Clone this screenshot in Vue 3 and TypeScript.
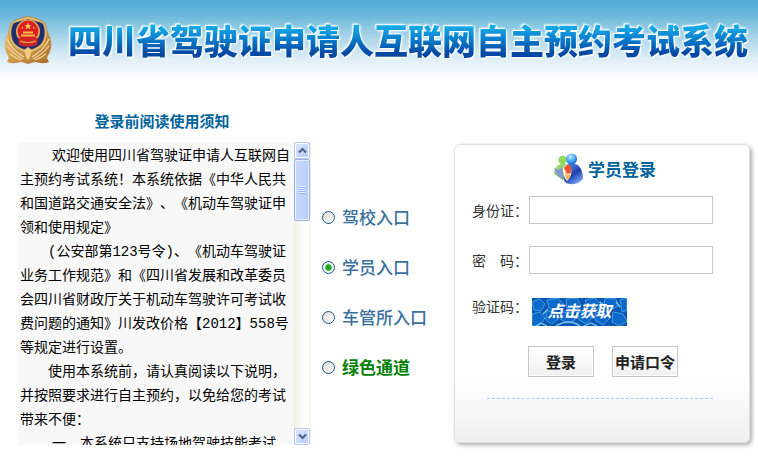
<script setup lang="ts">
import { onMounted, ref } from 'vue'

interface Entry {
  value: string
  label: string
  highlight?: boolean
}

interface Paragraph {
  text: string
  wide?: boolean
}

const entries: Entry[] = [
  { value: 'school', label: '驾校入口' },
  { value: 'student', label: '学员入口' },
  { value: 'office', label: '车管所入口' },
  { value: 'green', label: '绿色通道', highlight: true },
]

const paragraphs: Paragraph[] = [
  {
    text: '欢迎使用四川省驾驶证申请人互联网自主预约考试系统！本系统依据《中华人民共和国道路交通安全法》、《机动车驾驶证申领和使用规定》',
    wide: true,
  },
  {
    text: '(公安部第123号令)、《机动车驾驶证业务工作规范》和《四川省发展和改革委员会四川省财政厅关于机动车驾驶许可考试收费问题的通知》川发改价格【2012】558号等规定进行设置。',
  },
  { text: '使用本系统前，请认真阅读以下说明，并按照要求进行自主预约，以免给您的考试带来不便：' },
  { text: '一、本系统只支持场地驾驶技能考试', wide: true },
]

const selected = ref('student')
const idNumber = ref('')
const password = ref('')
const notice = ref<HTMLElement | null>(null)
const thumbTop = ref(0)

function syncThumb() {
  const el = notice.value
  if (!el) return
  const range = el.scrollHeight - el.clientHeight
  thumbTop.value = range > 0 ? (el.scrollTop / range) * 77 : 0
}

function scrollNotice(step: number) {
  if (notice.value) notice.value.scrollTop += step
  syncThumb()
}

onMounted(syncThumb)
</script>

<template>
  <div class="page">
    <header class="banner">
      <svg class="emblem" viewBox="0 0 48 48" aria-hidden="true">
        <defs>
          <linearGradient id="gold" x1="0" y1="0" x2="1" y2="1">
            <stop offset="0" stop-color="#e9c877" />
            <stop offset="0.5" stop-color="#d09a4c" />
            <stop offset="1" stop-color="#a8682a" />
          </linearGradient>
        </defs>
        <path
          d="M7 12 C2 18 0 25 1 32 C2 37 4 39 5 42 L3 46 C8 48 13 47 17 46 L24 48 L31 46 C35 47 40 48 45 46 L43 42 C44 39 46 37 47 32 C48 25 46 18 41 12 Z"
          fill="url(#gold)"
        />
        <path
          d="M3 23 Q8 34 20 41 M3 30 Q9 38 19 43 M6 38 Q11 42 17 44 M45 23 Q40 34 28 41 M45 30 Q39 38 29 43 M42 38 Q37 42 31 44"
          fill="none"
          stroke="#f3dca0"
          stroke-width="1.2"
        />
        <path
          d="M24 0 C19 2 11 3 7 7 C4 14 4 23 9 30 C14 35 20 36 24 39 C28 36 34 35 39 30 C44 23 44 14 41 7 C37 3 29 2 24 0 Z"
          fill="#dfb66a"
          stroke="#a87634"
          stroke-width="0.6"
        />
        <path
          d="M24 3 C19 5 13 5 9 8 C6 15 7 23 11 28 C15 32 20 33 24 35 C28 33 33 32 37 28 C41 23 42 15 39 8 C35 5 29 5 24 3 Z"
          fill="#20306f"
        />
        <circle cx="24" cy="15.5" r="12" fill="#e0ac53" />
        <circle cx="24" cy="15" r="10.4" fill="#dd1f22" />
        <path
          d="M24 6.5 L24.9 9.2 L27.6 9.2 L25.4 10.8 L26.3 13.4 L24 11.8 L21.7 13.4 L22.6 10.8 L20.4 9.2 L23.1 9.2 Z"
          fill="#ffd85a"
        />
        <path d="M17.5 11h1.6v1.6h-1.6zM29 11h1.6v1.6h-1.6zM19 15.5h10v2H19zM17 18.5h14v2H17z" fill="#f6bd46" />
        <path d="M14 22 L34 22 L33 29 Q24 32 15 29 Z" fill="#cf2427" />
        <path d="M16 25 Q24 28 32 25" fill="none" stroke="#e8ae4c" stroke-width="1.2" />
        <path d="M20 34 L24 31 L28 34 L26 41 L24 44 L22 41 Z" fill="#edcc82" />
      </svg>
      <h1 class="title"><span class="title-text">四川省驾驶证申请人互联网自主预约考试系统</span></h1>
    </header>

    <main class="content">
      <section class="notice">
        <h2 class="notice-title">登录前阅读使用须知</h2>
        <div class="notice-frame">
          <div ref="notice" class="notice-body" tabindex="0" @scroll="syncThumb">
            <p v-for="(item, i) in paragraphs" :key="i" :class="{ wide: item.wide }">{{ item.text }}</p>
          </div>
          <div class="scrollbar">
            <button type="button" class="arrow" aria-label="向上滚动" @click="scrollNotice(-24)">
              <svg viewBox="0 0 9 7"><path d="M1 5.5 L4.5 2 L8 5.5" /></svg>
            </button>
            <div class="track">
              <div class="thumb" :style="{ top: thumbTop + '%' }">
                <span class="grip"></span>
              </div>
            </div>
            <button type="button" class="arrow" aria-label="向下滚动" @click="scrollNotice(24)">
              <svg viewBox="0 0 9 7"><path d="M1 1.5 L4.5 5 L8 1.5" /></svg>
            </button>
          </div>
        </div>
      </section>

      <div class="entries" role="radiogroup" aria-label="入口">
        <label v-for="entry in entries" :key="entry.value" class="entry" :class="{ green: entry.highlight }">
          <input v-model="selected" type="radio" name="entry" :value="entry.value" />
          <span>{{ entry.label }}</span>
        </label>
      </div>

      <form class="login" @submit.prevent>
        <h2 class="login-title">
          <svg class="people" viewBox="0 0 30 32" aria-hidden="true">
            <defs>
              <radialGradient id="blueHead" cx="0.4" cy="0.3" r="0.7">
                <stop offset="0" stop-color="#c5ecff" />
                <stop offset="0.5" stop-color="#55b2f4" />
                <stop offset="1" stop-color="#1769cc" />
              </radialGradient>
              <linearGradient id="blueBody" x1="0" y1="0" x2="0.6" y2="1">
                <stop offset="0" stop-color="#5a9af0" />
                <stop offset="0.6" stop-color="#203fae" />
                <stop offset="1" stop-color="#6d9ff0" />
              </linearGradient>
              <linearGradient id="greenBody" x1="0" y1="0" x2="1" y2="1">
                <stop offset="0" stop-color="#b8ea88" />
                <stop offset="1" stop-color="#3fa63a" />
              </linearGradient>
            </defs>
            <circle cx="9.5" cy="7" r="4.2" fill="#93d85c" />
            <path d="M5 12 Q10 9 15 12 L17 20 L10 27 L1 21 Q1 15 5 12 Z" fill="url(#greenBody)" />
            <path d="M13 12 Q19 9 25 12 Q30 17 30 26 Q25 32 18 31 Q12 31 11 27 Z" fill="url(#blueBody)" />
            <circle cx="18.5" cy="6" r="5.6" fill="url(#blueHead)" />
            <path d="M1 15 Q5 18 9 15 L11 26 Q4 24 1 15 Z" fill="#8394db" />
            <path d="M10 15 Q14 8 18 15 Q20 22 14 28 Q10 24 10 15 Z" fill="#fff4e6" />
            <path d="M11 15 Q15 9 18 14 L18 20 L14 21 Z" fill="#f0512e" />
            <path d="M12 19 L14 22 L18 21 Q17 25 14 27 Q12 24 12 19 Z" fill="#ffb449" />
          </svg>
          <span>学员登录</span>
        </h2>

        <div class="field">
          <label for="id-number">身份证：</label>
          <input id="id-number" v-model="idNumber" type="text" />
        </div>
        <div class="field">
          <label for="password">密　码：</label>
          <input id="password" v-model="password" type="password" />
        </div>
        <div class="field code">
          <span class="caption">验证码：</span>
          <button type="button" class="captcha">
            <svg viewBox="0 0 95 28" preserveAspectRatio="none" aria-hidden="true">
              <rect width="95" height="28" fill="#0a55b5" />
              <g fill="#0d68cb" stroke="#3f9edb" stroke-width="1">
                <path d="M0 4 L8 1 L13 6 L9 13 L2 12 Z M15 2 L26 0 L31 6 L25 12 L17 10 Z M34 1 L45 0 L49 8 L42 13 L35 10 Z M53 2 L63 0 L69 6 L65 13 L56 12 Z M73 0 L84 1 L86 8 L79 12 L72 8 Z M88 2 L95 0 V12 L90 14 Z" />
                <path d="M0 16 L8 14 L13 20 L8 27 L0 28 Z M14 13 L23 13 L27 20 L20 26 L14 22 Z M29 14 L41 15 L43 22 L36 25 L28 21 Z M46 14 L57 14 L60 20 L54 26 L47 22 Z M63 15 L74 13 L78 20 L71 27 L63 22 Z M81 14 L91 16 L95 23 L88 28 L80 24 Z" />
              </g>
              <path
                d="M24 28 Q37 20 48 28 M4 28 L9 25 L15 28 M52 28 L59 25 L65 28 M68 4 L73 8 M11 16 L16 11 M84 4 L88 9"
                fill="none"
                stroke="#72c9e9"
                stroke-width="1.3"
              />
            </svg>
            <span>点击获取</span>
          </button>
        </div>
        <div class="actions">
          <button type="submit">登录</button>
          <button type="button">申请口令</button>
        </div>
        <div class="divider"></div>
      </form>
    </main>
  </div>
</template>

<style>
body {
  margin: 0;
  background: #fff;
}
</style>

<style scoped>
.page {
  font-family: "Noto Sans CJK SC", sans-serif;
  font-size: 14px;
  color: #000;
  text-spacing-trim: space-all;
}
h1,
h2,
p {
  margin: 0;
}
button,
input {
  box-sizing: border-box;
  margin: 0;
  font-family: inherit;
}
button {
  padding: 0;
  cursor: pointer;
}
.banner {
  display: flex;
  align-items: center;
  gap: 16px;
  height: 80px;
  padding: 0 0 0 4px;
  box-sizing: border-box;
  background: linear-gradient(#52aed6 0, #67b7da 14px, #acd6ea 38px, #e1eff7 60px, #fff 80px);
}
.emblem {
  flex: none;
  width: 48px;
  height: 48px;
}
.title {
  font-size: 34px;
  line-height: 48px;
  font-weight: 900;
  white-space: nowrap;
  filter: drop-shadow(1px 1px 0 #fff) drop-shadow(-1px -1px 0 #fff) drop-shadow(0 0 1px #fff);
}
.title-text {
  color: transparent;
  background: linear-gradient(#16a9e6 25%, #0a7ccc 50%, #0548a4 78%);
  background-clip: text;
  -webkit-background-clip: text;
}
.content {
  display: grid;
  grid-template-columns: 293px minmax(110px, 1fr) 296px;
  column-gap: 11px;
  align-items: start;
  padding: 28px 8px 24px 18px;
}
.notice-title {
  padding-right: 5px;
  font-size: 15px;
  line-height: 26px;
  text-align: center;
  color: #00639c;
}
.notice-frame {
  display: flex;
  height: 303px;
  margin-top: 8px;
}
.notice-body {
  flex: 1;
  box-sizing: border-box;
  padding: 2px 0 0 2px;
  overflow-y: auto;
  scrollbar-width: none;
  background: #f8f8f8;
  font-family: "Liberation Mono", "Noto Sans CJK SC", monospace;
  line-height: 24px;
  outline: none;
}
.notice-body p {
  text-indent: 28px;
}
.notice-body p.wide {
  text-indent: 32px;
}
.scrollbar {
  display: flex;
  flex-direction: column;
  width: 17px;
  background: linear-gradient(90deg, #eeede5, #f8f8f3 30%, #fefefb 85%, #eeede5);
}
.arrow {
  display: flex;
  align-items: center;
  justify-content: center;
  width: 16px;
  height: 17px;
  border: 1px solid #b4c8f6;
  border-radius: 2px;
  background: linear-gradient(135deg, #dce7ff, #b6cafa);
  box-shadow: inset 0 0 0 1px #fff;
}
.arrow svg {
  width: 9px;
  height: 7px;
  fill: none;
  stroke: #4d6185;
  stroke-width: 2;
}
.track {
  position: relative;
  flex: 1;
}
.thumb {
  position: absolute;
  left: 0;
  display: flex;
  align-items: center;
  justify-content: center;
  box-sizing: border-box;
  width: 16px;
  height: 23%;
  border: 1px solid #98b1e4;
  border-radius: 2px;
  background: linear-gradient(90deg, #c9d8fc, #b9cbf9);
  box-shadow: inset 0 0 0 1px #e9f0ff;
}
.grip {
  width: 6px;
  height: 8px;
  background: repeating-linear-gradient(#eef4ff 0 1px, #8cb0f8 1px 2px);
}
.entries {
  display: flex;
  flex-direction: column;
  gap: 26px;
  padding-top: 97px;
}
.entry {
  display: flex;
  align-items: center;
  gap: 7px;
  font-size: 17px;
  line-height: 24px;
  font-weight: 500;
  color: #39709e;
  white-space: nowrap;
}
.entry.green {
  font-weight: 700;
  color: #008000;
}
.entry input {
  appearance: none;
  width: 13px;
  height: 13px;
  border: 1px solid #1f5280;
  border-radius: 50%;
  background: linear-gradient(135deg, #dcdcd7, #fff);
}
.entry input:checked {
  background: radial-gradient(circle, #21a121 0 2px, #4fc64f 3px, #f5f5f2 4px);
}
.login {
  box-sizing: border-box;
  margin-top: 36px;
  padding: 8px 36px 43px 17px;
  border: 1px solid #e0e0e0;
  border-radius: 6px;
  background: linear-gradient(#fff 78%, #f0f0f0);
  box-shadow: 2px 2px 4px #aaa;
  color: #333;
}
.login-title {
  display: flex;
  align-items: center;
  gap: 5px;
  padding-left: 81px;
  font-size: 17px;
  line-height: 32px;
  color: #00639c;
}
.people {
  width: 30px;
  height: 32px;
}
.field {
  display: flex;
  align-items: center;
  height: 28px;
  margin-top: 22px;
}
.login-title + .field {
  margin-top: 11px;
}
.field.code {
  align-items: flex-start;
  height: 32px;
  margin-top: 20px;
}
.field label,
.caption {
  flex: none;
  width: 57px;
  line-height: 24px;
  white-space: nowrap;
}
.field input {
  flex: 1;
  min-width: 0;
  height: 28px;
  padding: 0 6px;
  border: 1px solid #c6c6c6;
  background: #fff;
  font-size: 14px;
}
.captcha {
  display: grid;
  align-self: flex-end;
  width: 95px;
  height: 28px;
  margin-left: 3px;
  border: 0;
  background: #0a55b5;
  color: #fff;
  font-size: 16px;
  line-height: 24px;
  font-weight: 700;
  font-style: italic;
}
.captcha svg,
.captcha span {
  grid-area: 1 / 1;
}
.captcha svg {
  width: 95px;
  height: 28px;
}
.captcha span {
  z-index: 1;
}
.actions {
  display: flex;
  gap: 18px;
  margin: 20px 0 0 56px;
}
.actions button {
  width: 66px;
  height: 31px;
  border: 1px solid #c4c4c4;
  background: linear-gradient(#fff, #f0f0f0);
  box-shadow: inset 0 0 0 1px #fff;
  color: #222;
  font-size: 15px;
  font-weight: 700;
  white-space: nowrap;
}
.divider {
  margin: 21px 0 0 15px;
  border-top: 1px dashed #a5cce6;
}
</style>
